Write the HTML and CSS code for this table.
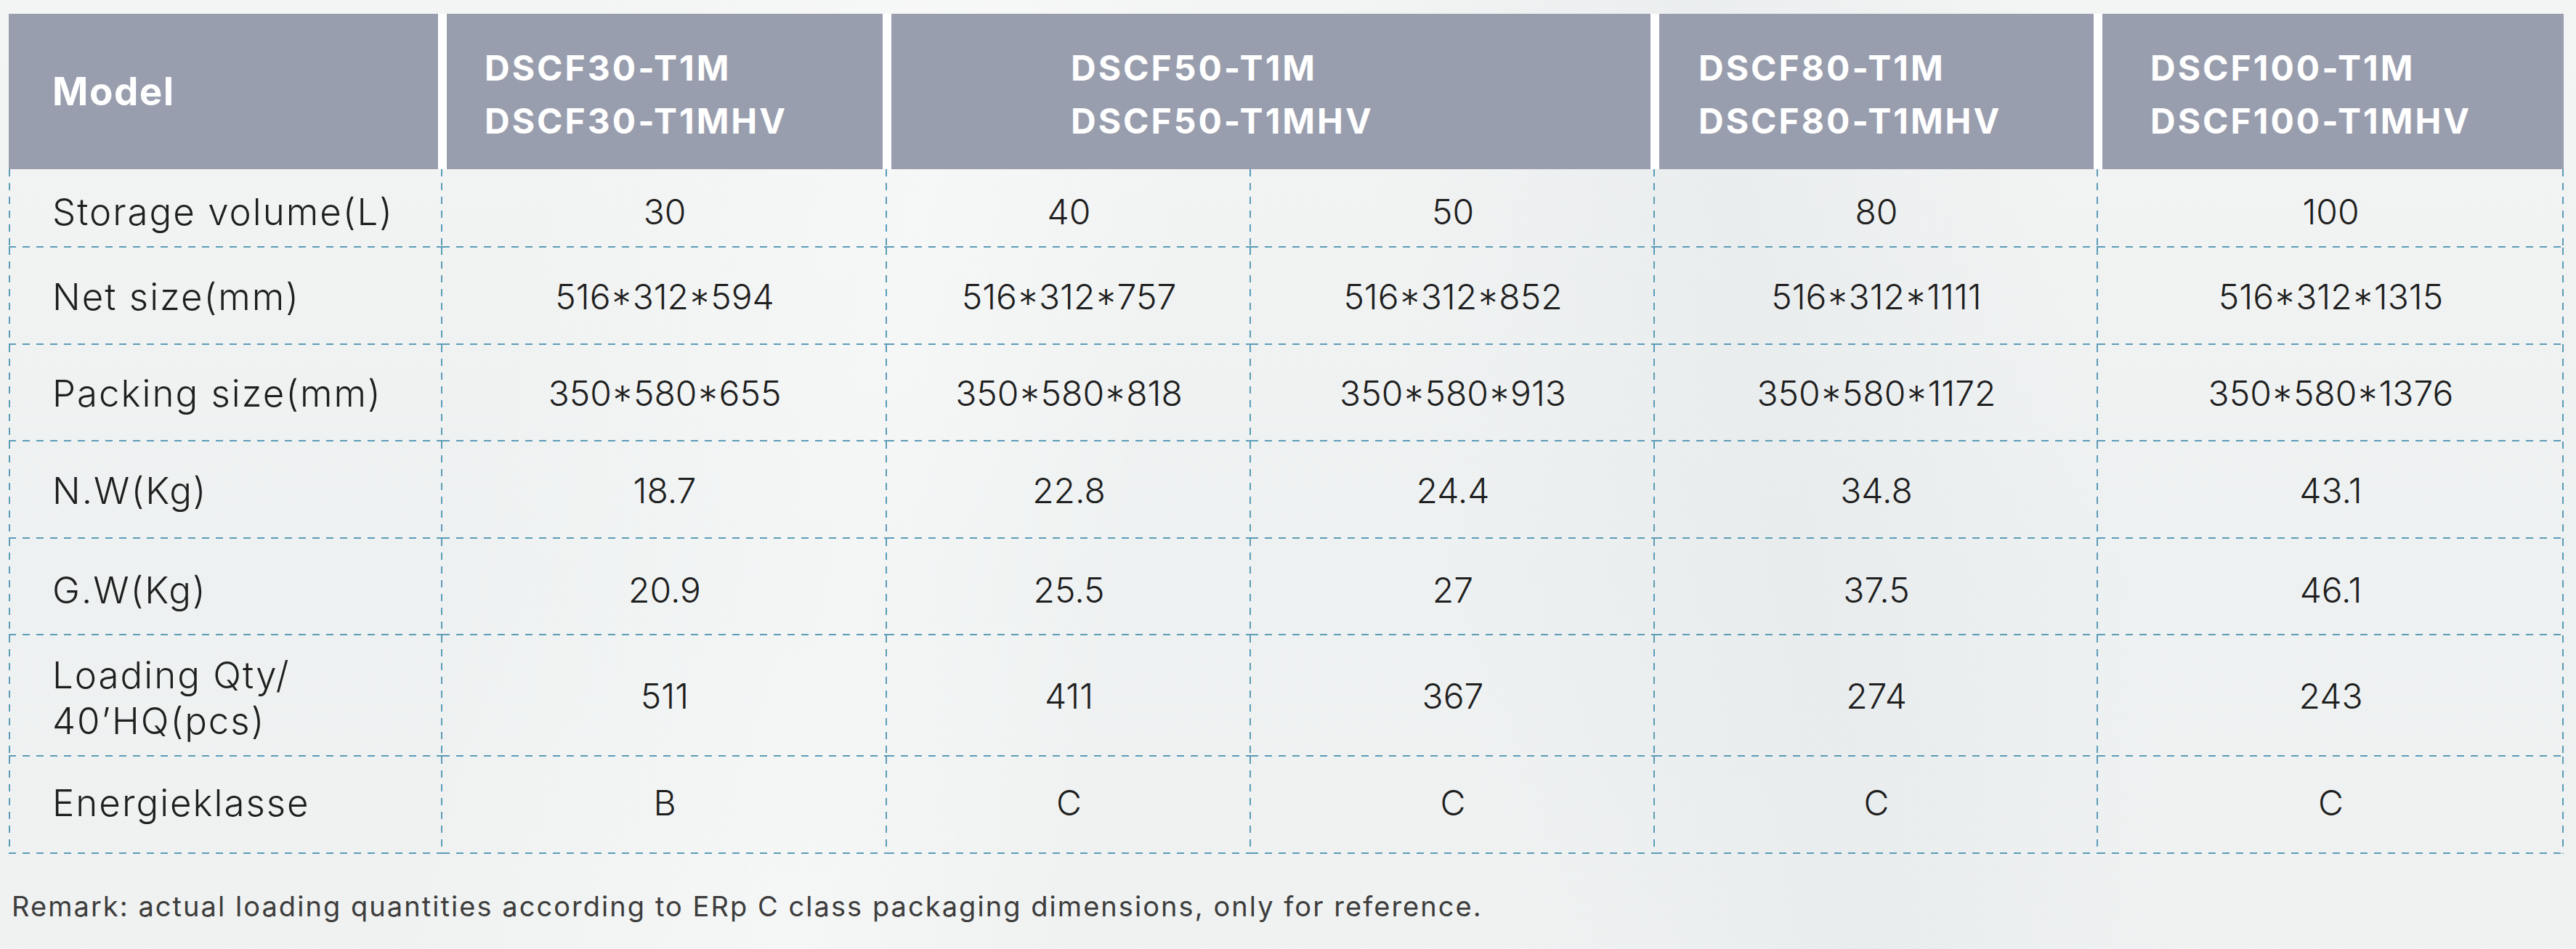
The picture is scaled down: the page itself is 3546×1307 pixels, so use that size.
FILE: index.html
```html
<!DOCTYPE html>
<html lang="en">
<head>
<meta charset="utf-8">
<title>Specifications</title>
<link rel="stylesheet" href="styles.css">
</head>
<body>
<main class="page">
  <div class="spec">
    <div class="hd hd-first"><span class="model">Model</span></div>
    <div class="hd hd-2"><span>DSCF30-T1M</span><span>DSCF30-T1MHV</span></div>
    <div class="hd hd-3"><span>DSCF50-T1M</span><span>DSCF50-T1MHV</span></div>
    <div class="hd hd-4"><span>DSCF80-T1M</span><span>DSCF80-T1MHV</span></div>
    <div class="hd hd-last"><span>DSCF100-T1M</span><span>DSCF100-T1MHV</span></div>

    <div class="c lbl top">Storage volume(L)</div>
    <div class="c top">30</div><div class="c top">40</div><div class="c top">50</div><div class="c top">80</div><div class="c top">100</div>

    <div class="c lbl">Net size(mm)</div>
    <div class="c">516*312*594</div><div class="c">516*312*757</div><div class="c">516*312*852</div><div class="c">516*312*1111</div><div class="c">516*312*1315</div>

    <div class="c lbl">Packing size(mm)</div>
    <div class="c">350*580*655</div><div class="c">350*580*818</div><div class="c">350*580*913</div><div class="c">350*580*1172</div><div class="c">350*580*1376</div>

    <div class="c lbl">N.W(Kg)</div>
    <div class="c">18.7</div><div class="c">22.8</div><div class="c">24.4</div><div class="c">34.8</div><div class="c">43.1</div>

    <div class="c lbl low">G.W(Kg)</div>
    <div class="c low">20.9</div><div class="c low">25.5</div><div class="c low">27</div><div class="c low">37.5</div><div class="c low">46.1</div>

    <div class="c lbl lbl-2">Loading Qty/<br>40’HQ(pcs)</div>
    <div class="c">511</div><div class="c">411</div><div class="c">367</div><div class="c">274</div><div class="c">243</div>

    <div class="c lbl high">Energieklasse</div>
    <div class="c high">B</div><div class="c high">C</div><div class="c high">C</div><div class="c high">C</div><div class="c high">C</div>
  </div>
  <p class="remark">Remark: actual loading quantities according to ERp C class packaging dimensions, only for reference.</p>
</main>
</body>
</html>
```
FILE: styles.css
```css
html, body {
  margin: 0;
  padding: 0;
}
body {
  width: 3546px;
  height: 1307px;
  overflow: hidden;
  background-color: #eff1f1;
  background-image:
    linear-gradient(100deg, rgba(255,255,255,0) 20%, rgba(255,255,255,0.35) 35%, rgba(255,255,255,0) 45%),
    linear-gradient(80deg, rgba(225,230,232,0) 55%, rgba(225,230,232,0.45) 68%, rgba(225,230,232,0) 80%),
    linear-gradient(180deg, #f3f4f4 0%, #eef1f1 60%, #f0f2f2 100%);
  font-family: Inter, "Noto Sans", "Liberation Sans", sans-serif;
  color: #1f1f1f;
}
.page {
  padding: 19px 17px 0 12px;
}
.spec {
  --dash: #5b9cb7;
  display: grid;
  grid-template-columns: 597px 612px 501px 556px 610px 641px;
  grid-template-rows: 214px 108px 134px 133px 134px 133px 167px 134px;
}
.hd {
  background: #999eae;
  background-clip: padding-box;
  border-left: 6px solid #fff;
  border-right: 6px solid #fff;
  color: #fff;
  font-weight: 700;
  font-size: 48px;
  line-height: 73px;
  display: flex;
  flex-direction: column;
  justify-content: center;
  padding-top: 8px;
  letter-spacing: 3px;
}
.hd-first {
  border-left: 0;
  padding-left: 60px;
  padding-top: 0;
}
.model {
  font-size: 53px;
  letter-spacing: 1.5px;
}
.hd-2 { padding-left: 52px; }
.hd-3 { grid-column: span 2; padding-left: 247px; }
.hd-4 { padding-left: 54px; }
.hd-last { border-right: 0; padding-left: 66px; }

.c {
  display: flex;
  align-items: center;
  justify-content: center;
  font-weight: 300;
  font-size: 48px;
  text-align: center;
  background-image:
    linear-gradient(to right, var(--dash) 10px, transparent 10px),
    linear-gradient(to bottom, var(--dash) 10px, transparent 10px);
  background-size: 19px 2px, 2px 19px;
  background-repeat: repeat-x, repeat-y;
  background-position: left bottom, right top;
}
.top { padding-top: 8px; }
.low { padding-top: 8px; }
.high { padding-bottom: 8px; }
.lbl {
  justify-content: flex-start;
  text-align: left;
  padding-left: 60px;
  font-size: 51px;
  letter-spacing: 2px;
  background-image:
    linear-gradient(to right, var(--dash) 10px, transparent 10px),
    linear-gradient(to bottom, var(--dash) 10px, transparent 10px),
    linear-gradient(to bottom, var(--dash) 10px, transparent 10px);
  background-size: 19px 2px, 2px 19px, 2px 19px;
  background-repeat: repeat-x, repeat-y, repeat-y;
  background-position: left bottom, right top, left top;
}
.lbl-2 {
  line-height: 63px;
  padding-top: 4px;
}
.remark {
  margin: 49px 0 0 4px;
  font-size: 38px;
  font-weight: 400;
  letter-spacing: 2.05px;
  color: #3d3d3d;
}
```
